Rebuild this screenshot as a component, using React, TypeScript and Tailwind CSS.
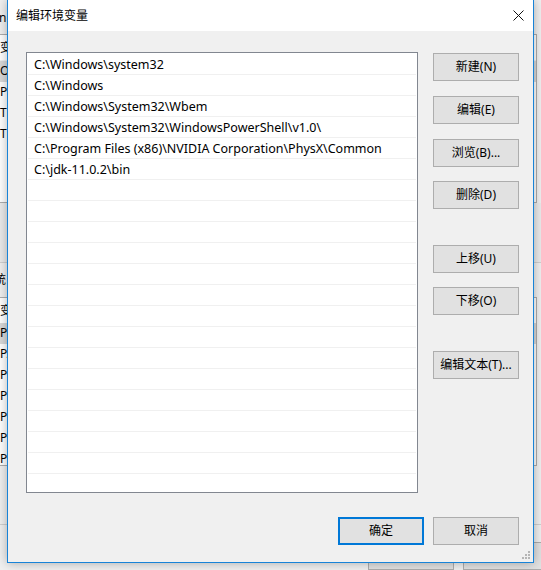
import React from "react";

const paths = [
  "C:\\Windows\\system32",
  "C:\\Windows",
  "C:\\Windows\\System32\\Wbem",
  "C:\\Windows\\System32\\WindowsPowerShell\\v1.0\\",
  "C:\\Program Files (x86)\\NVIDIA Corporation\\PhysX\\Common",
  "C:\\jdk-11.0.2\\bin",
];

function Btn({ label, className = "" }: { label: string; className?: string }) {
  return (
    <div
      className={`h-[28px] w-[86px] shrink-0 bg-[#e1e1e1] border border-[#adadad] flex items-center justify-center text-[12px] text-black ${className}`}
    >
      {label}
    </div>
  );
}

export default function App() {
  const rows = Array.from({ length: 21 }, (_, i) => paths[i] ?? "");
  const userVars = ["变", "O", "Pa", "TE", "TM"];
  const sysVars = ["变", "Pa", "PA", "PR", "PR", "PR", "PR", "PS"];
  return (
    <div className="w-[541px] h-[570px] relative overflow-hidden bg-[#f0f0f0] text-black font-['Noto_Sans','Noto_Sans_CJK_SC',sans-serif] text-[12px] leading-none">
      {/* parent window */}
      <div className="flex flex-col w-full h-full">
        <div className="h-[35px] flex items-center -ml-[1px] pt-[2px]">n</div>
        <div className="h-[176px] -ml-[1px] mr-[4px] border border-[#adadad] bg-white flex flex-col overflow-hidden">
          <div className="h-[26px] shrink-0 flex items-center pt-[2px] border-b border-[#f0f0f0]">{userVars[0]}</div>
          {userVars.slice(1).map((v, i) => (
            <div key={i} className={`h-[21px] shrink-0 flex items-center ${i === 0 ? "bg-[#d9d9d9]" : ""}`}>{v}</div>
          ))}
        </div>
        <div className="h-[63px] bg-[#ebebeb] border-b border-[#d0d0d0]" />
        <div className="h-[35px] flex items-center -ml-[6px]">统</div>
        <div className="h-[176px] -ml-[1px] mr-[4px] border border-[#adadad] bg-white flex flex-col overflow-hidden">
          <div className="h-[25px] shrink-0 flex items-center pt-[2px]">{sysVars[0]}</div>
          {sysVars.slice(1).map((v, i) => (
            <div key={i} className={`h-[21px] shrink-0 flex items-center ${i === 0 ? "bg-[#d9d9d9]" : ""}`}>{v}</div>
          ))}
        </div>
        <div className="h-[61px] border-b border-[#d0d0d0]" />
        <div className="h-[18px]" />
        <div className="flex gap-[9px] pl-[368px]">
          <Btn label="确定" />
          <Btn label="取消" />
        </div>
      </div>

      {/* dialog window */}
      <div className="absolute left-[7px] top-0 w-[527px] h-[563px] border-x border-b border-[#1883d7] bg-[#f0f0f0] flex flex-col shadow-[0_0_10px_rgba(0,0,0,0.3)]">
        <div className="h-[31px] shrink-0 bg-white flex items-center justify-between pl-[8px]">
          <span className="text-[12px]">编辑环境变量</span>
          <svg width="11" height="11" viewBox="0 0 11 11" className="mr-[9px]">
            <path d="M0.5 0.5 L10.5 10.5 M10.5 0.5 L0.5 10.5" stroke="#111" strokeWidth="1" />
          </svg>
        </div>
        <div className="flex-1 flex flex-col pl-[18px] pr-[14px] pt-[21px]">
          <div className="flex">
            <div className="w-[392px] h-[441px] border border-[#828790] bg-white pt-[1px] px-[1px] overflow-hidden flex flex-col">
              {rows.map((p, i) => (
                <div key={i} className="h-[21px] shrink-0 border-b border-[#f0f0f0] flex items-center pl-[6px] pt-[2px] whitespace-nowrap text-[12.5px]">
                  {p}
                </div>
              ))}
            </div>
            <div className="ml-[15px] flex flex-col">
              <Btn label="新建(N)" className="mt-[1px]" />
              <Btn label="编辑(E)" className="mt-[15px]" />
              <Btn label="浏览(B)..." className="mt-[15px]" />
              <Btn label="删除(D)" className="mt-[14px]" />
              <Btn label="上移(U)" className="mt-[36px]" />
              <Btn label="下移(O)" className="mt-[14px]" />
              <Btn label="编辑文本(T)..." className="mt-[36px]" />
            </div>
          </div>
          <div className="mt-[24px] flex justify-end gap-[9px]">
            <div className="h-[28px] w-[86px] bg-[#e1e1e1] border-2 border-[#0078d7] flex items-center justify-center text-[12px]">确定</div>
            <Btn label="取消" />
          </div>
        </div>
        <svg width="8" height="8" viewBox="0 0 8 8" className="absolute right-[3px] bottom-[3px]">
          <rect x="6" y="0" width="2" height="2" fill="#b5b5b5" />
          <rect x="3" y="3" width="2" height="2" fill="#b5b5b5" />
          <rect x="6" y="3" width="2" height="2" fill="#b5b5b5" />
          <rect x="0" y="6" width="2" height="2" fill="#b5b5b5" />
          <rect x="3" y="6" width="2" height="2" fill="#b5b5b5" />
          <rect x="6" y="6" width="2" height="2" fill="#b5b5b5" />
        </svg>
      </div>
    </div>
  );
}
